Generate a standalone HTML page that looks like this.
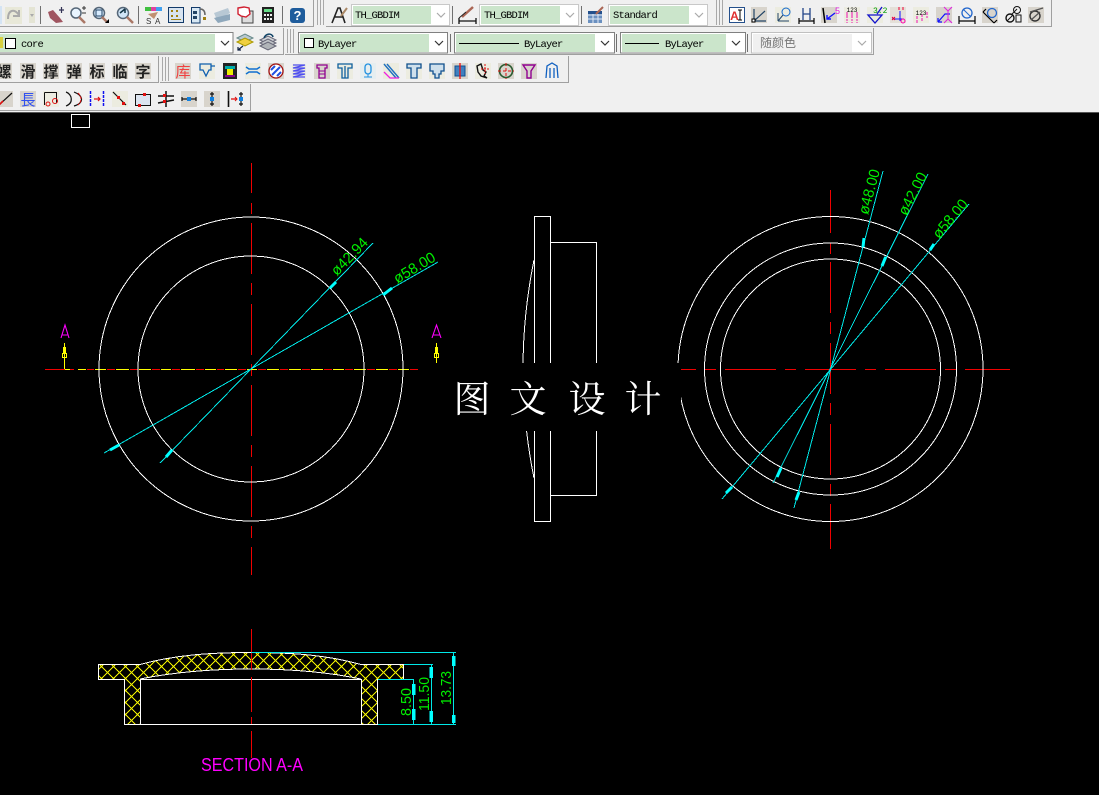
<!DOCTYPE html>
<html><head><meta charset="utf-8"><title>CAD</title>
<style>
html,body{margin:0;padding:0;width:1099px;height:795px;overflow:hidden;background:#000}
svg{display:block}
.m{font-family:"Liberation Mono",monospace;font-size:10.5px;fill:#000;letter-spacing:-.8px}
.z{font-family:"Liberation Sans","Noto Sans CJK SC",sans-serif;font-weight:700;font-size:15px;fill:#222;text-anchor:middle}
.d{font-family:"Liberation Sans",sans-serif;fill:#00f000;font-size:15px;text-anchor:middle}
.c path,.c circle,.c rect{fill:none}
</style></head><body>
<svg width="1099" height="795" viewBox="0 0 1099 795" xmlns="http://www.w3.org/2000/svg">
<defs>
<pattern id="h" width="12" height="12" patternUnits="userSpaceOnUse" patternTransform="translate(101.5 666.5)">
<path d="M0 0L12 12M12 0L0 12" stroke="#f0f000" stroke-width="1" fill="none" shape-rendering="crispEdges"/>
<rect x="-1" y="-1" width="2" height="2" fill="#ff0"/><rect x="11" y="-1" width="2" height="2" fill="#ff0"/><rect x="-1" y="11" width="2" height="2" fill="#ff0"/><rect x="11" y="11" width="2" height="2" fill="#ff0"/>
</pattern>
<path id="chev" d="M0 0L4 4L8 0" fill="none" stroke-width="1.2"/>
</defs>

<!-- toolbar background -->
<rect width="1099" height="113" fill="#f0f0f0"/>
<g fill="none" stroke="#a0a0a0">
<path d="M-1 26.5H313.5V-1"/><path d="M326 26.5H1051.5V-1"/>
<path d="M-1 54.5H283.5V28"/><path d="M285 54.5H873.5V28"/>
<path d="M-1 82.5H158.5V56"/><path d="M160 82.5H568.5V56"/>
<path d="M-1 110.5H250.5V84"/>
</g>
<g stroke="#a8a8a8" fill="none">
<path d="M317.5 0V25M320.5 0V25M323.5 0V25M716.5 0V25M719.5 0V25M722.5 0V25"/>
<path d="M287.5 29V53M290.5 29V53M293.5 29V53"/>
<path d="M162.5 57V81M165.5 57V81M168.5 57V81"/>
</g>
<g stroke="#707070"><path d="M40.5 6V24M138.5 6V24M282.5 6V24M452.5 6V24M581.5 6V24M450.5 34V52M616.5 34V52M747.5 34V52"/></g>
<rect y="112" width="1099" height="1" fill="#555"/>

<!-- row1 combos -->
<g>
<rect x="351.5" y="4.5" width="98" height="21" fill="#fff" stroke="#c8c8c8"/><rect x="353" y="6" width="78" height="18" fill="#cbe5cb"/>
<rect x="479.5" y="4.5" width="99" height="21" fill="#fff" stroke="#c8c8c8"/><rect x="481" y="6" width="79" height="18" fill="#cbe5cb"/>
<rect x="608.5" y="4.5" width="99" height="21" fill="#fff" stroke="#c8c8c8"/><rect x="610" y="6" width="79" height="18" fill="#cbe5cb"/>
<use href="#chev" x="437" y="13" stroke="#aaa"/><use href="#chev" x="566" y="13" stroke="#aaa"/><use href="#chev" x="695" y="13" stroke="#aaa"/>
<text class="m" x="355" y="18">TH_GBDIM</text><text class="m" x="484" y="18">TH_GBDIM</text><text class="m" x="613" y="18">Standard</text>
</g>
<!-- row2 combos -->
<g>
<rect x="-2" y="32.5" width="235" height="20.5" fill="#fff" stroke="#808080"/><rect x="0" y="34" width="215" height="18" fill="#cbe5cb"/>
<rect x="0" y="37" width="3" height="11" fill="#d8d040"/><rect x="5.5" y="38.5" width="10" height="10" fill="#fff" stroke="#000"/>
<text class="m" x="21" y="47">core</text><use href="#chev" x="221" y="41" stroke="#333"/>
<rect x="298.5" y="32.5" width="149" height="20.5" fill="#fff" stroke="#808080"/><rect x="300" y="34" width="129" height="18" fill="#cbe5cb"/>
<rect x="304.5" y="38.5" width="9" height="9" fill="#fff" stroke="#000"/><text class="m" x="318" y="47">ByLayer</text><use href="#chev" x="435" y="41" stroke="#333"/>
<rect x="454.5" y="32.5" width="160" height="20.5" fill="#fff" stroke="#808080"/><rect x="456" y="34" width="139" height="18" fill="#cbe5cb"/>
<rect x="459" y="43" width="60" height="1" fill="#000"/><text class="m" x="524" y="47">ByLayer</text><use href="#chev" x="601" y="41" stroke="#333"/>
<rect x="620.5" y="32.5" width="125" height="20.5" fill="#fff" stroke="#808080"/><rect x="622" y="34" width="104" height="18" fill="#cbe5cb"/>
<rect x="625" y="43" width="34" height="1" fill="#000"/><text class="m" x="665" y="47">ByLayer</text><use href="#chev" x="732" y="41" stroke="#333"/>
<rect x="751.5" y="32.5" width="120" height="20.5" fill="#fff" stroke="#c0c0c0"/><rect x="753" y="34" width="99" height="18" fill="#f0f0f0"/>
<text x="760" y="47" font-family="'Liberation Sans','Noto Sans CJK SC',sans-serif" font-size="12" fill="#777">随颜色</text><use href="#chev" x="858" y="41" stroke="#aaa"/>
</g>

<!-- row1 icons left -->
<g>
<rect x="0" y="6" width="2" height="18" fill="#d4e4f4"/>
<rect x="5" y="7" width="17" height="17" fill="#e8e8d8"/><path d="M8 19C8 10 14 8 19 15M19 10V16H13" fill="none" stroke="#aaa" stroke-width="2"/>
<rect x="29" y="7" width="6" height="16" fill="#e4e4d4"/><path d="M30 14H34L32 17Z" fill="#aaa"/>
<path d="M48 12L53 10L60 18L63 22L56 23L50 18Z" fill="#a05560"/><path d="M59 10H64M61.5 7V13" stroke="#335" stroke-width="1.2"/>
<circle cx="76" cy="13" r="5" fill="#e8f4ff" stroke="#567" stroke-width="1.5"/><path d="M79 17L85 23" stroke="#a76" stroke-width="2.5"/><path d="M82 8H86M84 6V10M82 13H86" stroke="#333"/>
<circle cx="99" cy="13" r="5.5" fill="#d8ecff" stroke="#567" stroke-width="1.5"/><rect x="96" y="10" width="6" height="6" fill="none" stroke="#246"/><path d="M102 17L107 22" stroke="#a76" stroke-width="2.5"/><path d="M109 19V23H105Z" fill="#000"/>
<circle cx="123" cy="13" r="5.5" fill="#cfe4f6" stroke="#567" stroke-width="1.5"/><path d="M120 13L125 9M125 9V13" stroke="#134" stroke-width="1.5"/><path d="M127 17L133 23" stroke="#a76" stroke-width="2.5"/>
<path d="M145 7H162V11H145Z" fill="#e040a0"/><path d="M145 7H151V11H145Z" fill="#40c040"/><path d="M156 7H162V11H156Z" fill="#40a0f0"/><path d="M148 14L158 12L154 19Z" fill="#c09070"/>
<text x="146" y="24" font-family="Liberation Sans" font-size="8" fill="#333">S</text><text x="155" y="24" font-family="Liberation Sans" font-size="8" fill="#333">A</text>
<rect x="168.5" y="7.5" width="15" height="15" fill="#d8e4f0" stroke="#123a6a"/><path d="M171 10h2v2h-2zM176 10h2v2h-2zM171 15h2v2h-2zM176 15h2v2h-2zM171 19h10v1h-10z" fill="#a08010"/>
<path d="M191.5 7.5H200V23H191.5Z" fill="#d8e8f4" stroke="#123a6a"/><path d="M200 9C204 9 205 12 205 15" fill="none" stroke="#666" stroke-width="1.5"/><rect x="203" y="17" width="3" height="3" fill="#a08010"/><rect x="193" y="11" width="4" height="3" fill="#246"/><rect x="193" y="16" width="4" height="3" fill="#246"/>
<path d="M214 13L228 8L230 13L217 20Z" fill="#b8c8d4"/><path d="M214 18L230 14L230 20L218 23Z" fill="#8fa8bc"/>
<rect x="242" y="11" width="11" height="12" fill="#ddd" stroke="#444"/><path d="M238 8L244 7L249 8L250 14L246 17L241 16L238 14Z" fill="#fff" stroke="#d02030" stroke-width="1.4"/>
<rect x="262" y="7" width="12" height="16" fill="#222"/><rect x="264" y="9" width="8" height="3" fill="#6d8"/><path d="M264 14h2v2h-2zM267 14h2v2h-2zM270 14h2v2h-2zM264 18h2v2h-2zM267 18h2v2h-2zM270 18h2v2h-2z" fill="#eee"/>
<rect x="290" y="8" width="15" height="15" rx="3" fill="#1e5c9c"/><text x="297.5" y="20" font-family="Liberation Sans" font-weight="700" font-size="13" fill="#fff" text-anchor="middle">?</text>
<!-- style icons -->
<path d="M332 23L338 8H340L345 23M335 17H343" fill="none" stroke="#222" stroke-width="1.6"/><path d="M341 16L347 8" stroke="#a86" stroke-width="2"/>
<path d="M459 21H476M459 18V24M476 18V24" stroke="#111" stroke-width="1.3"/><path d="M462 17L473 7" stroke="#a65" stroke-width="2.5"/><path d="M459 18L466 12" stroke="#222"/>
<rect x="588" y="11" width="14" height="12" fill="#6a90c0"/><path d="M588 15H602M588 19H602M593 11V23M598 11V23" stroke="#e0e8f4"/><rect x="588" y="11" width="14" height="3" fill="#24508c"/><path d="M596 14L603 7" stroke="#a65" stroke-width="2"/>
</g>

<!-- row1 right icons -->
<g fill="none">
<rect x="729.5" y="7.5" width="15" height="15" fill="#fff" stroke="#24508c"/><text x="734.5" y="20" font-family="Liberation Sans" font-weight="700" font-size="12" fill="#e03030" text-anchor="middle">A</text><path d="M740 10V20M738 10H742M738 20H742" stroke="#000"/>
<rect x="751" y="7" width="16" height="16" fill="#d8d4cc"/><path d="M754 21V9M754 21H766M754 21L765 11" stroke="#246" stroke-width="1.2"/><rect x="752" y="19" width="3" height="3" fill="#fff" stroke="#000"/>
<rect x="775" y="7" width="16" height="16" fill="#ecece0"/><circle cx="786" cy="12" r="4" stroke="#16c"/><path d="M778 21V13M778 21H789M778 21L783 15" stroke="#246"/>
<path d="M799 21H814M799 18V24M814 18V24" stroke="#000" stroke-width="1.2"/><path d="M803 8V20M810 8V20M803 14H810" stroke="#248" stroke-width="1.3"/>
<rect x="821" y="7" width="16" height="16" fill="#d8d4cc"/><path d="M823 8L825 23" stroke="#000" stroke-width="1.5"/><path d="M835 13L827 19M827 15V19H831" stroke="#11f" stroke-width="1.4"/><text x="835" y="14" font-family="Liberation Sans" font-size="9" fill="#e020e0">5</text>
<rect x="844" y="7" width="16" height="16" fill="#ecece0"/><path d="M847 12V23M852 12V23M857 12V23" stroke="#f010b0" stroke-dasharray="6 1 2 1"/><text x="852" y="12" font-family="Liberation Mono" font-size="6" fill="#000" text-anchor="middle">123</text>
<rect x="867" y="7" width="16" height="16" fill="#ecece0"/><path d="M868 15H882L875 23ZM877 14L882 7" stroke="#11c" stroke-width="1.3"/><text x="873" y="13" font-family="Liberation Mono" font-size="8" fill="#090">3.2</text>
<rect x="890" y="7" width="16" height="16" fill="#e4e0d8"/><path d="M892 19H904M900 11V21" stroke="#11f"/><circle cx="903" cy="21" r="2" stroke="#f0a"/><path d="M892 17L895 20M895 17L892 20M899 7V10M903 7V10" stroke="#e03"/>
<rect x="913" y="7" width="16" height="16" fill="#ecece0"/><path d="M917 16V23M922 14V21M927 12V18" stroke="#f010b0" stroke-dasharray="3 1"/><text x="921" y="15" font-family="Liberation Mono" font-size="6" fill="#000" text-anchor="middle">123</text>
<rect x="936" y="7" width="16" height="16" fill="#d8d4cc"/><path d="M938 22L945 14H950M938 22V18M938 22H942" stroke="#11f" stroke-width="1.2"/><path d="M944 7L948 11L952 7M944 23L948 19L952 23M948 11V19" stroke="#e020e0"/>
<path d="M959 21H975M959 16V24M975 16V24" stroke="#000" stroke-width="1.2"/><ellipse cx="967" cy="13" rx="5" ry="5" stroke="#26c" stroke-width="1.3"/><path d="M963 9L971 17" stroke="#26c"/>
<rect x="982" y="7" width="16" height="16" fill="#d8d4cc"/><path d="M983 12L994 23M983 12L986 9M994 23L997 20" stroke="#000" stroke-width="1.2"/><circle cx="992" cy="13" r="4.5" stroke="#26c" stroke-width="1.3"/>
<circle cx="1010" cy="18" r="4" stroke="#111" stroke-width="1.4"/><path d="M1007 21L1013 15" stroke="#111"/><circle cx="1017" cy="10" r="3.5" stroke="#111"/><path d="M1011 15L1017 9" stroke="#111"/><rect x="1016" y="15" width="5" height="7" stroke="#111"/>
<rect x="1028" y="7" width="16" height="16" fill="#d8d4cc"/><circle cx="1035" cy="16" r="5" stroke="#333" stroke-width="1.4"/><path d="M1030 12L1043 8M1031 20L1040 12" stroke="#555" stroke-width="1.3"/>
</g>

<!-- row2 icons -->
<g>
<path d="M237 38L245 34L253 38L245 42Z" fill="#b8c8d0" stroke="#688"/><path d="M237 42L245 38L253 42L245 46Z" fill="#f0d040" stroke="#a90"/><path d="M238 50L243 46M238 47V50H241" stroke="#124" stroke-width="1.2" fill="none"/>
<path d="M260 40L268 36L276 40L268 44Z" fill="#d0d4d8" stroke="#667"/><path d="M260 43L268 39L276 43L268 47Z" fill="#c0c4c8" stroke="#667"/><path d="M260 46L268 42L276 46L268 50Z" fill="#b0b4b8" stroke="#667"/><path d="M264 38C266 33 272 33 273 37" fill="none" stroke="#146" stroke-width="1.6"/>
</g>

<!-- row3 text icons -->
<g>
<rect x="-4" y="63" width="16" height="16" fill="#d8d4cc"/><rect x="20" y="63" width="16" height="16" fill="#d8d4cc"/><rect x="43" y="63" width="16" height="16" fill="#d8d4cc"/><rect x="66" y="63" width="16" height="16" fill="#d8d4cc"/><rect x="89" y="63" width="16" height="16" fill="#d8d4cc"/><rect x="112" y="63" width="16" height="16" fill="#d8d4cc"/><rect x="135" y="63" width="16" height="16" fill="#d8d4cc"/>
<text class="z" x="4" y="77">螺</text><text class="z" x="28" y="77">滑</text><text class="z" x="51" y="77">撑</text><text class="z" x="74" y="77">弹</text><text class="z" x="97" y="77">标</text><text class="z" x="120" y="77">临</text><text class="z" x="143" y="77">字</text>
<rect x="175" y="63" width="16" height="16" fill="#d8d4cc"/><text x="183" y="77" text-anchor="middle" font-family="'Liberation Sans','Noto Sans CJK SC',sans-serif" font-size="15" fill="#f04040">库</text>
</g>
<g fill="none">
<rect x="199" y="63" width="16" height="16" fill="#ecece0"/><path d="M200 64H211V70H209L206 76L203 70H200ZM211 66H215" stroke="#1060b0" stroke-width="1.3"/>
<rect x="223" y="63" width="14" height="16" fill="#222"/><rect x="225" y="66" width="10" height="3" fill="#0aa"/><rect x="227" y="69" width="6" height="6" fill="#ee0"/><rect x="225" y="75" width="10" height="2" fill="#808"/>
<rect x="245" y="63" width="16" height="16" fill="#ecece0"/><path d="M246 67L249 69H257L260 67M246 74L249 72H257L260 74" stroke="#1070d0" stroke-width="1.5"/>
<rect x="268" y="63" width="16" height="16" fill="#d8d4cc"/><circle cx="276" cy="71" r="7" fill="#fff" stroke="#a01010" stroke-width="1.3"/><path d="M272 75L280 67M271 70L275 66M277 76L281 72" stroke="#2050e0" stroke-width="2"/>
<rect x="292" y="64" width="14" height="15" fill="#ecece0"/><path d="M293 65H305L293 68H305L293 71H305L293 74H305L293 77H305" stroke="#5050f0" stroke-width="1.2"/>
<rect x="314" y="63" width="16" height="16" fill="#d8d4cc"/><path d="M317 65H327V68H325V78H319V68H317Z" stroke="#900090" stroke-width="1.3"/><path d="M319 71H325M319 74H325" stroke="#900090"/>
<rect x="337" y="63" width="16" height="16" fill="#ecece0"/><path d="M338 64H352V68H348V78H342V68H338ZM345 66V78" stroke="#1060a0" stroke-width="1.3"/>
<rect x="360" y="63" width="16" height="16" fill="#e6eef0"/><rect x="365" y="64" width="6" height="10" rx="3" stroke="#2090e0" stroke-width="1.3"/><path d="M364 77H372M368 74V77" stroke="#2090e0"/>
<rect x="383" y="63" width="16" height="16" fill="#ecece0"/><path d="M384 64L396 78M387 64L399 78" stroke="#2070c0" stroke-width="1.4"/><path d="M384 72L390 78H399" stroke="#f020e0" stroke-width="1.3"/>
<rect x="406" y="63" width="16" height="16" fill="#ecece0"/><path d="M407 64H421V68H417V78H411V68H407Z" fill="#cfe0ec" stroke="#105090" stroke-width="1.3"/>
<rect x="429" y="63" width="16" height="16" fill="#ecece0"/><path d="M430 64H444V71H441V74H439V78H435V74H433V71H430Z" fill="#cfe0ec" stroke="#105090" stroke-width="1.3"/>
<rect x="452" y="63" width="16" height="16" fill="#d8d4cc"/><rect x="455" y="66" width="10" height="10" fill="#4080c0" stroke="#105090"/><path d="M460 63V79" stroke="#f01010" stroke-width="1.3"/>
<rect x="475" y="63" width="16" height="16" fill="#ecece0"/><path d="M477 66L481 64L483 70L486 72L484 76L487 78L481 76L478 72Z" stroke="#111" stroke-width="1.4"/><path d="M485 64V74M481 69H490" stroke="#e01010" stroke-dasharray="2 1"/>
<rect x="498" y="63" width="16" height="16" fill="#d8d4cc"/><circle cx="506" cy="71" r="6.5" stroke="#2a5a30" stroke-width="1.6"/><path d="M498 71H514M506 63V79" stroke="#e01010" stroke-dasharray="3 2"/>
<rect x="521" y="63" width="16" height="16" fill="#d8d4cc"/><path d="M523 65H535L531 71V78H527V71Z" stroke="#900090" stroke-width="1.4"/>
<path d="M546 78L547 66L552 63L557 66L558 78M550 78V68M554 78V68" stroke="#1060c0" stroke-width="1.3"/>
</g>

<!-- row4 icons -->
<g fill="none">
<rect x="-3" y="91" width="16" height="16" fill="#d8d4cc"/><path d="M-1 105L12 93" stroke="#111" stroke-width="1.2"/><path d="M-1 105L3 101" stroke="#e01010" stroke-width="1.6"/>
<rect x="20" y="91" width="16" height="16" fill="#d8d4cc"/><text x="28" y="105" text-anchor="middle" font-family="'Liberation Sans','Noto Sans CJK JP',sans-serif" font-size="15" fill="#3050f0">長</text>
<rect x="43" y="91" width="16" height="16" fill="#ecece0"/><path d="M44.5 92.5H56.5V103" stroke="#111"/><path d="M44.5 92.5V105" stroke="#111"/><circle cx="48" cy="104" r="2" stroke="#e01010"/><circle cx="55" cy="101" r="2.5" stroke="#e01010"/>
<path d="M66 92C72 94 74 103 66 106" stroke="#111" stroke-width="1.2"/><path d="M74 92C84 96 84 103 74 106" stroke="#111" stroke-width="1.2"/><path d="M78 93C82 97 82 101 78 105" stroke="#e01010" stroke-dasharray="3 1"/>
<path d="M90.5 91V107M103.5 91V107" stroke="#1010f0" stroke-width="1.5" stroke-dasharray="3 1"/><path d="M94 99H100M98 97L100 99L98 101" stroke="#e01010" stroke-width="1.2"/>
<rect x="112" y="91" width="16" height="16" fill="#ecece0"/><path d="M113 92L126 105" stroke="#111" stroke-width="1.2"/><rect x="117" y="96" width="3" height="3" fill="#e01010"/><rect x="122" y="102" width="3" height="3" fill="#e01010"/>
<rect x="135.5" y="94.5" width="15" height="11" fill="#dce4f0" stroke="#111"/><rect x="143" y="93" width="3" height="3" fill="#e01010"/><rect x="138" y="104" width="3" height="3" fill="#e01010"/>
<path d="M158 96H174M158 103L174 100M166 91V107" stroke="#111" stroke-width="1.5"/><rect x="163" y="94" width="3" height="3" fill="#e01010"/><rect x="163" y="100" width="3" height="3" fill="#e01010"/>
<rect x="181" y="91" width="16" height="16" fill="#d8d4cc"/><path d="M182 99H196M182 97V101M196 97V101" stroke="#111" stroke-width="1.2"/><rect x="187" y="97" width="4" height="4" fill="#1080e0"/>
<rect x="204" y="91" width="16" height="16" fill="#d8d4cc"/><path d="M212 92V106M210 94H214M210 104H214" stroke="#111" stroke-width="1.2"/><rect x="210" y="97" width="4" height="4" fill="#1080e0"/>
<path d="M228.5 91V107" stroke="#111" stroke-width="1.6"/><path d="M241 92V106M239 94H243M239 104H243" stroke="#111" stroke-width="1.2"/><rect x="239" y="97" width="4" height="4" fill="#1080e0"/><path d="M231 99H237" stroke="#e01010" stroke-width="1.3"/><path d="M235 97L237 99L235 101" stroke="#e01010"/>
</g>

<!-- canvas -->
<rect y="113" width="1099" height="682" fill="#000"/>
<rect x="71.5" y="114.5" width="18" height="13" fill="#000" stroke="#fff"/>

<g class="c" shape-rendering="crispEdges">
<!-- center lines -->
<path d="M251.5 163V193M251.5 203V214M251.5 223V274M251.5 283V295M251.5 304V355M251.5 364V376M251.5 385V436M251.5 445V457M251.5 466V517M251.5 526V538M251.5 547V575" stroke="#f00000"/>
<path d="M830.5 190V233M830.5 243V254M830.5 262V313M830.5 322V334M830.5 343V394M830.5 403V415M830.5 424V475M830.5 484V496M830.5 504V549" stroke="#f00000"/>
<path d="M680 369.5H696M705 369.5H716M725 369.5H776M785 369.5H796M805 369.5H856M865 369.5H876M885 369.5H936M945 369.5H956M965 369.5H1010" stroke="#f00000"/>
<path d="M45 369.5H65M70 369.5H74M87 369.5H94M107 369.5H115M130 369.5H138M152 369.5H160M172 369.5H180M196 369.5H204M217 369.5H224M238 369.5H246M258 369.5H266M280 369.5H288M302 369.5H310M324 369.5H332M345 369.5H353M367 369.5H375M389 369.5H397M410 369.5H418" stroke="#f00000"/>
<path d="M65 369.5H70M78 369.5H86M95 369.5H106M116 369.5H129M139 369.5H151M161 369.5H171M181 369.5H195M205 369.5H216M225 369.5H237M247 369.5H257M267 369.5H279M289 369.5H301M311 369.5H323M333 369.5H344M354 369.5H366M376 369.5H388M398 369.5H409" stroke="#ffff00"/>
<!-- left circles -->
<circle cx="251" cy="369" r="152" stroke="#fff"/><circle cx="251" cy="369" r="113" stroke="#fff"/>
<!-- right circles -->
<circle cx="830.5" cy="369" r="152.5" stroke="#fff"/><circle cx="830.5" cy="369" r="126" stroke="#fff"/><circle cx="830.5" cy="369" r="110" stroke="#fff"/>
<!-- side view -->
<rect x="534.5" y="216.5" width="16" height="305" stroke="#fff"/>
<path d="M550.5 242.5H596.5V495.5H550.5" stroke="#fff"/>
<path d="M534 260Q512 369 534 478" stroke="#fff"/>
<!-- dims left -->
<path d="M104 453L438 262M160 463L373 243" stroke="#00e8e8"/>
<!-- dims right -->
<path d="M794 508L883 171M773 483L928 174M722 499L969 204" stroke="#00e8e8"/>
</g>
<!-- arrowheads -->
<g stroke="#00ffff" stroke-width="3">
<path d="M110 450L119 445M383 295L392 288M166 457L172 450M330 288L336 282M864 238L863 247M796 500L799 492M882 266L885.7 257M777 477L781 468M934 244L930 250M726 493L732 487"/>
</g>
<!-- A markers -->
<g fill="none" stroke="#ffff00" shape-rendering="crispEdges">
<path d="M64.5 369V343M436.5 343V363"/>
<rect x="62.5" y="353.5" width="4" height="4"/><rect x="434.5" y="353.5" width="4" height="4"/>
<path d="M63.5 353V347M65.5 353V347M435.5 353V347M437.5 353V347"/>
</g>
<path d="M61 338L65 325L69 338M62.5 335H67.5M432 338L436.5 325L441 338M433.5 335H439.5" fill="none" stroke="#ff00ff" stroke-width="1.1"/>
<!-- dim text -->
<text class="d" transform="translate(353 260) rotate(-46)" textLength="46" lengthAdjust="spacingAndGlyphs">ø42.94</text>
<text class="d" transform="translate(417 272) rotate(-31)" textLength="46" lengthAdjust="spacingAndGlyphs">ø58.00</text>
<text class="d" transform="translate(874 193) rotate(-75)" textLength="46" lengthAdjust="spacingAndGlyphs">ø48.00</text>
<text class="d" transform="translate(917 196) rotate(-63)" textLength="46" lengthAdjust="spacingAndGlyphs">ø42.00</text>
<text class="d" transform="translate(954 222) rotate(-50)" textLength="46" lengthAdjust="spacingAndGlyphs">ø58.00</text>

<!-- section -->
<path d="M98.5 664.5H140C175 655 210 652.5 251 652.5C292 652.5 327 655 361 664.5H403.5V680H378V724H361.5V679.5H140V724H124.5V680H98.5Z" fill="url(#h)"/>
<path d="M140 680C175 672 210 669 251 669C292 669 327 672 361 680V724H140Z" fill="#000"/>
<g fill="none" stroke="#fff" shape-rendering="crispEdges">
<path d="M98.5 664.5H140C175 655 210 652.5 251 652.5C292 652.5 327 655 361 664.5H403.5V679.5H377.5V724.5H124.5V679.5H98.5Z"/>
<path d="M140.5 724V679.5H361.5V724"/>
<path d="M140 679C175 672 210 669 251 669C292 669 327 672 361 679"/>
</g>
<g shape-rendering="crispEdges" fill="none">
<path d="M251.5 629V670M251.5 677V712M251.5 717V724M251.5 731V758" stroke="#f00000"/>
<path d="M251 652.5H456M404 664.5H433M378 679.5H414M378 724.5H456M413.5 679V724M431.5 664V724M453.5 652V724" stroke="#00e8e8"/>
</g>
<g fill="#00ffff"><rect x="412" y="684" width="3.5" height="11"/><rect x="412" y="709" width="3.5" height="11"/><rect x="429.5" y="667" width="3.5" height="11"/><rect x="429.5" y="711" width="3.5" height="11"/><rect x="452" y="656" width="3.5" height="10"/><rect x="452" y="715" width="3.5" height="8"/></g>
<text class="d" transform="translate(411 702) rotate(-90)" textLength="28" lengthAdjust="spacingAndGlyphs">8.50</text>
<text class="d" transform="translate(429 694) rotate(-90)" textLength="34" lengthAdjust="spacingAndGlyphs">11.50</text>
<text class="d" transform="translate(451 688) rotate(-90)" textLength="34" lengthAdjust="spacingAndGlyphs">13.73</text>
<text x="201" y="771" font-family="Liberation Sans" font-size="18" fill="#ff00ff" textLength="102" lengthAdjust="spacingAndGlyphs">SECTION A-A</text>

<!-- watermark -->
<rect x="445" y="363" width="236" height="68" fill="#000"/>
<g font-family="'Liberation Serif','Noto Serif CJK SC',serif" font-size="37" fill="#fff" text-anchor="middle">
<text x="472" y="412">图</text><text x="528" y="412">文</text><text x="587" y="412">设</text><text x="643" y="412">计</text>
</g>
</svg>
</body></html>
